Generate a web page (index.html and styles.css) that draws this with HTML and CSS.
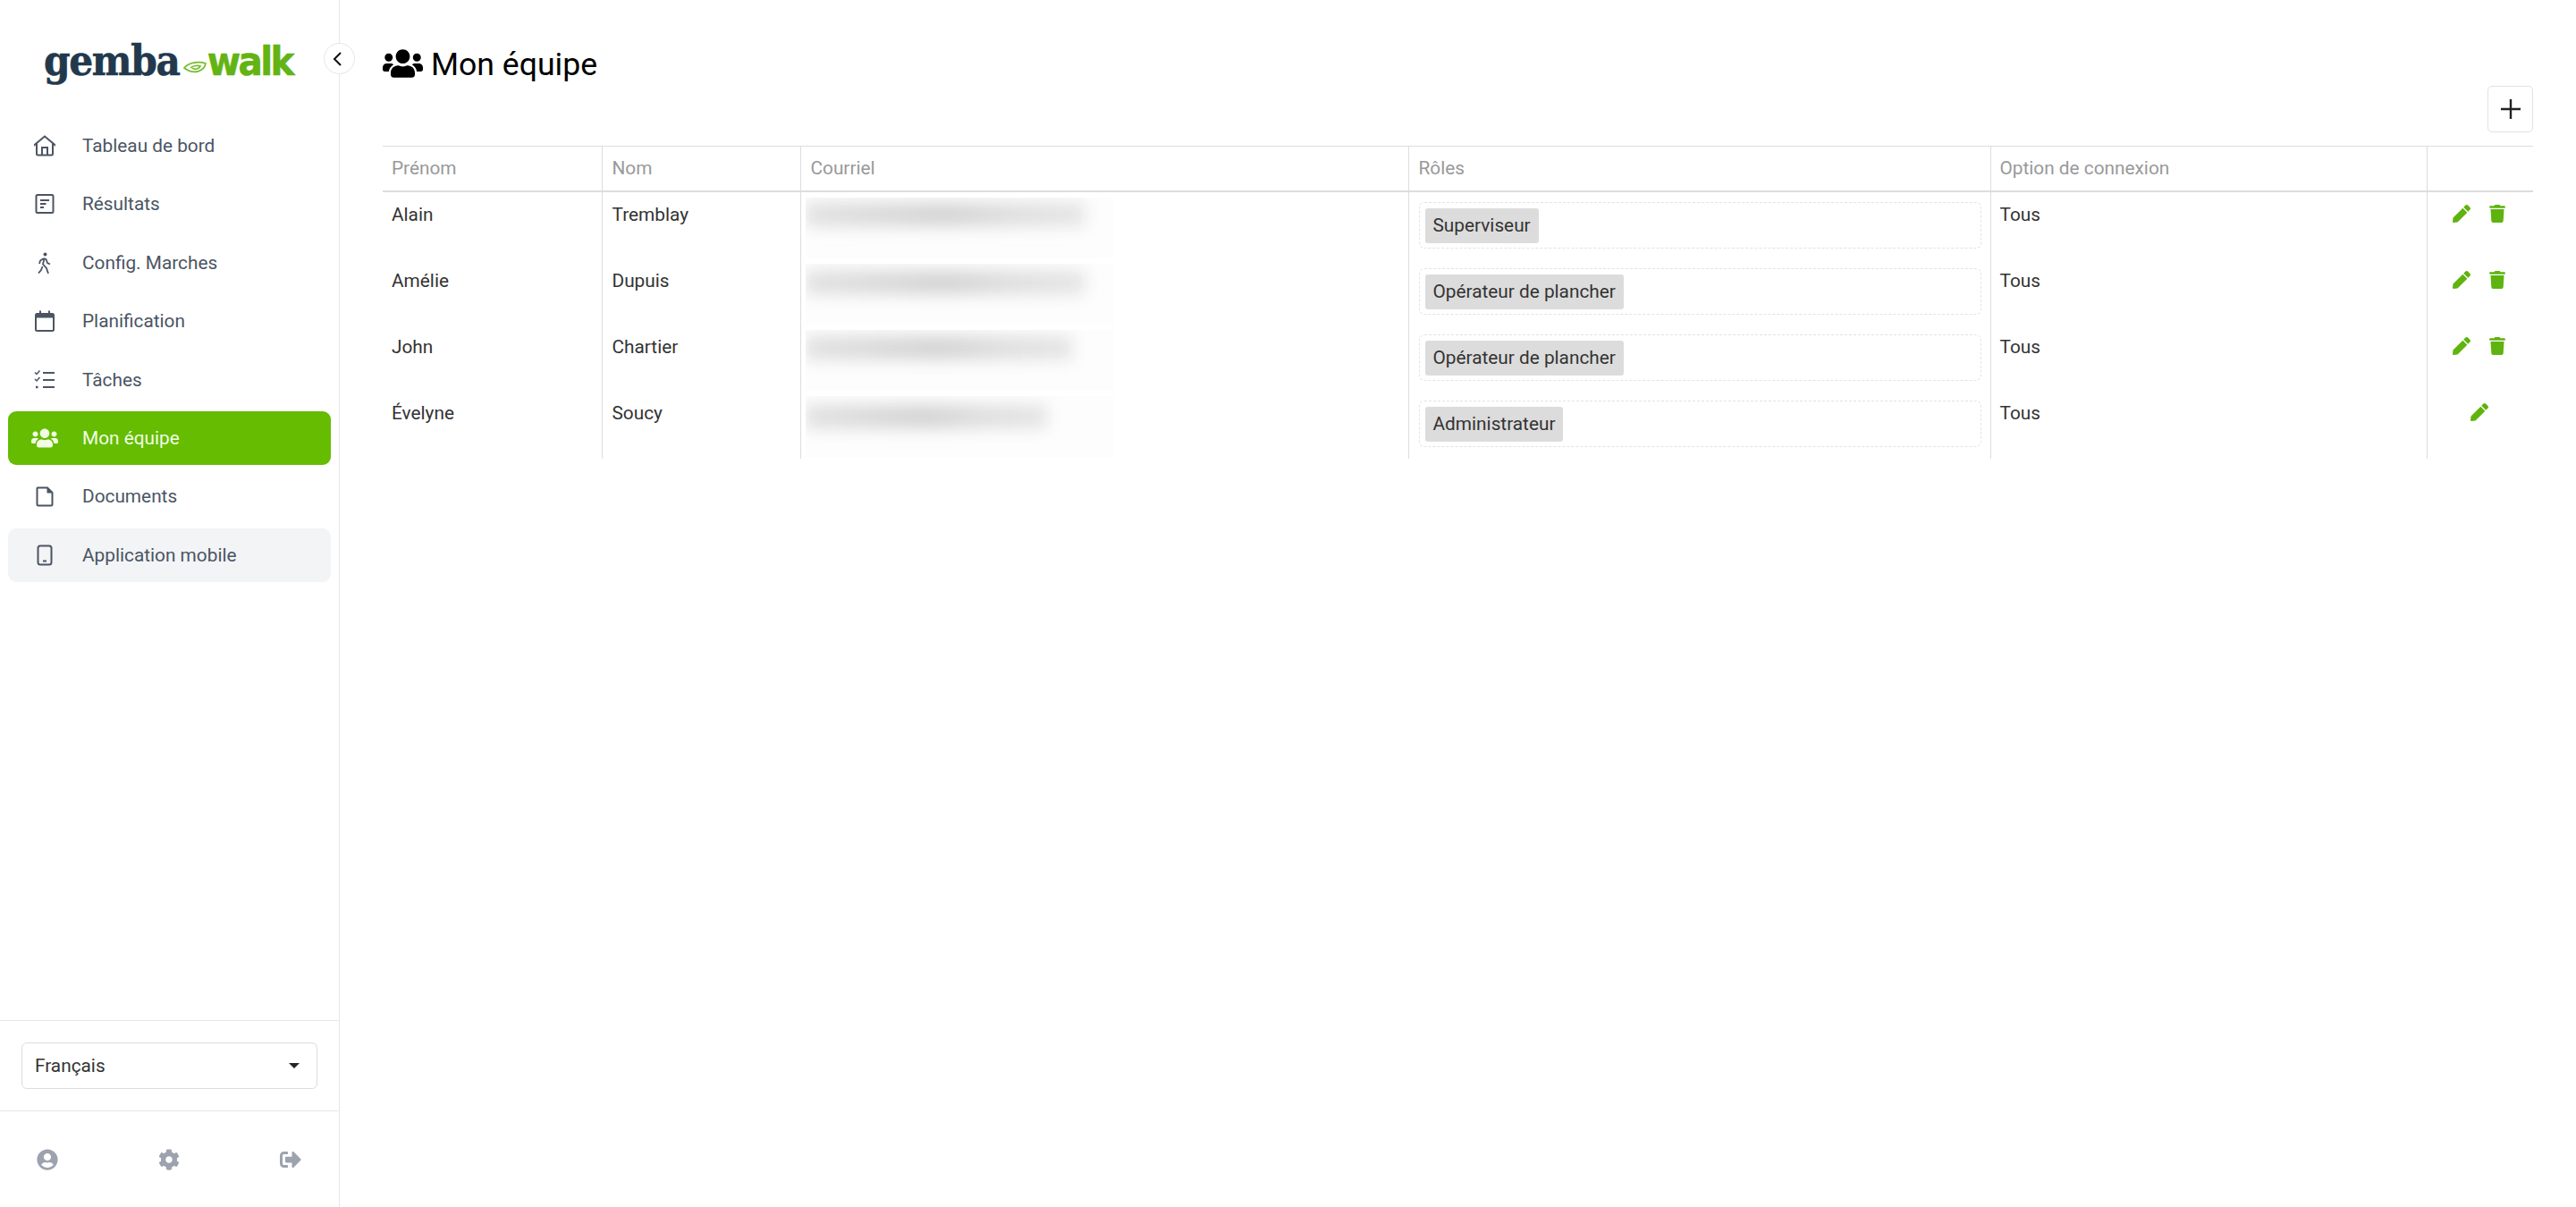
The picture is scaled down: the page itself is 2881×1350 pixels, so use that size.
FILE: index.html
```html
<!DOCTYPE html>
<html lang="fr">
<head>
  <meta charset="UTF-8" />
  <title>Mon équipe</title>
  <link rel="stylesheet" href="styles.css">
</head>
<body>
  <svg class="defs" aria-hidden="true">
    <symbol id="users" viewBox="0 0 640 512"><path d="M96 224c35.3 0 64-28.7 64-64s-28.7-64-64-64-64 28.7-64 64 28.7 64 64 64zm448 0c35.3 0 64-28.7 64-64s-28.7-64-64-64-64 28.7-64 64 28.7 64 64 64zm32 32h-64c-17.6 0-33.5 7.1-45.1 18.6 40.3 22.1 68.9 62 75.1 109.4h66c17.7 0 32-14.3 32-32v-32c0-35.3-28.7-64-64-64zm-256 0c61.9 0 112-50.1 112-112S381.9 32 320 32 208 82.1 208 144s50.1 112 112 112zm76.8 32h-8.3c-20.8 10-43.9 16-68.5 16s-47.6-6-68.5-16h-8.3C179.6 288 128 339.6 128 403.2V432c0 26.5 21.5 48 48 48h288c26.5 0 48-21.5 48-48v-28.8c0-63.6-51.6-115.2-115.2-115.2zm-223.7-13.4C161.5 263.1 145.6 256 128 256H64c-35.3 0-64 28.7-64 64v32c0 17.7 14.3 32 32 32h65.9c6.3-47.4 34.9-87.3 75.2-109.4z"/></symbol>
    <symbol id="pen" viewBox="0 0 512 512"><path d="M290.74 93.24l128.02 128.02-277.99 277.99-114.14 12.6C11.35 513.54-1.56 500.62.14 485.34l12.7-114.22 277.9-277.88zm207.2-19.06l-60.11-60.11c-18.75-18.75-49.16-18.75-67.91 0l-56.55 56.55 128.02 128.02 56.55-56.55c18.75-18.76 18.75-49.16 0-67.91z"/></symbol>
    <symbol id="trash" viewBox="0 0 448 512"><path d="M432 32H312l-9.4-18.7A24 24 0 0 0 281.1 0H166.8a23.72 23.72 0 0 0-21.4 13.3L136 32H16A16 16 0 0 0 0 48v32a16 16 0 0 0 16 16h416a16 16 0 0 0 16-16V48a16 16 0 0 0-16-16zM53.2 467a48 48 0 0 0 47.9 45h245.8a48 48 0 0 0 47.9-45L416 128H32z"/></symbol>
  </svg>

  <div class="layout">
    <!-- menu de gauche -->
    <aside class="sidebar">
      <button class="collapse-btn" aria-label="Réduire">
        <svg viewBox="0 0 12 18" width="12" height="18"><path d="M10 2 3 9l7 7" fill="none" stroke="#111" stroke-width="2"/></svg>
      </button>

      <div class="logo">
        <span class="logo-gemba">gemba</span>
        <svg class="logo-leaf" viewBox="0 0 26 16">
          <path d="M1 8C6 2 17 0 25 3 23 12 12 16 1 8Z M8 8c3-3 9-3 11-2-2 4-7 4-9 2" fill="none" stroke="#74bd2c" stroke-width="1.700"/>
        </svg>
        <span class="logo-walk">walk</span>
      </div>

      <nav class="nav">
        <a class="nav-item" href="#">
          <svg class="nav-icon" viewBox="0 0 24 24" fill="none" stroke="currentColor" stroke-width="2"><path d="M-.5 12 12 1.5 24.500 12M3 9.500V21a1.500 1.500 0 0 0 1.500 1.500h15A1.500 1.500 0 0 0 21 21V9.500M9 22.500V14h6v8.500"/></svg>
          Tableau de bord
        </a>
        <a class="nav-item" href="#">
          <svg class="nav-icon" viewBox="0 0 24 24" fill="none" stroke="currentColor" stroke-width="2"><rect x="2.500" y="2" width="19" height="20" rx="1.500"/><path d="M7 8h10M7 12h6.500M7 16h4"/></svg>
          Résultats
        </a>
        <a class="nav-item" href="#">
          <svg class="nav-icon" viewBox="0 0 24 24" fill="none" stroke="currentColor" stroke-width="2"><circle cx="12.500" cy="2.500" r="2" fill="currentColor" stroke="none"/><path d="M11 7 7 9.500 6 13M11 7l2.500 1 1.500 4 3 1.500M11.500 7.500l-1.500 6 4 4.500 2 6M9.500 16l-1.500 4-3 3.500" stroke-width="1.800"/></svg>
          Config. Marches
        </a>
        <a class="nav-item" href="#">
          <svg class="nav-icon" viewBox="0 0 24 24" fill="none" stroke="currentColor" stroke-width="2"><rect x="2" y="4" width="20" height="19" rx="1.500"/><path d="M2 6.500h20" stroke-width="4"/><path d="M7 .5v4M17 .5v4"/></svg>
          Planification
        </a>
        <a class="nav-item" href="#">
          <svg class="nav-icon" viewBox="0 0 24 24" fill="none" stroke="currentColor" stroke-width="2"><path d="M10 4h13M10 12h13M10 20h13"/><path d="M1 3.500 3 5.500 6.500 1.500M1 11 3 13 6.500 9" stroke-width="1.500"/><path d="M2 20h2.500" stroke-width="2.500"/></svg>
          Tâches
        </a>
        <a class="nav-item active" href="#">
          <svg class="nav-icon nav-icon-users" fill="currentColor"><use href="#users"/></svg>
          Mon équipe
        </a>
        <a class="nav-item" href="#">
          <svg class="nav-icon" viewBox="0 0 24 24" fill="none" stroke="currentColor" stroke-width="2"><path d="M4 2.500h11l5.500 5.500v13a1.500 1.500 0 0 1-1.500 1.500H5A1.500 1.500 0 0 1 3.500 21V3A.5.5 0 0 1 4 2.500Z"/><path d="M14.500 2.500 20.500 8.500H14.500Z" fill="currentColor" stroke="none"/></svg>
          Documents
        </a>
        <a class="nav-item hover" href="#">
          <svg class="nav-icon" viewBox="0 0 24 24" fill="none" stroke="currentColor" stroke-width="2"><rect x="4.500" y="1.500" width="15" height="21" rx="2.500"/><path d="M10 18.500h4"/></svg>
          Application mobile
        </a>
      </nav>

      <div class="lang-block">
        <div class="lang-select">
          <span>Français</span>
          <span class="caret"></span>
        </div>
      </div>

      <div class="foot-icons">
        <svg viewBox="0 0 496 512"><path d="M248 8C111 8 0 119 0 256s111 248 248 248 248-111 248-248S385 8 248 8zm0 96c48.6 0 88 39.4 88 88s-39.4 88-88 88-88-39.4-88-88 39.4-88 88-88zm0 344c-58.7 0-111.3-26.6-146.5-68.2 18.8-35.4 55.6-59.8 98.5-59.8 2.4 0 4.8.4 7.1 1.1 13 4.2 26.6 6.9 40.9 6.9 14.3 0 28-2.7 40.9-6.9 2.3-.7 4.700-1.100 7.100-1.100 42.900 0 79.700 24.400 98.500 59.800C359.300 421.400 306.700 448 248 448z"/></svg>
        <svg viewBox="0 0 512 512"><path d="M487.4 315.7l-42.6-24.6c4.3-23.2 4.3-47 0-70.2l42.6-24.6c4.9-2.8 7.1-8.6 5.5-14-11.1-35.6-30-67.8-54.7-94.6-3.8-4.1-10-5.1-14.8-2.3L380.8 110c-17.9-15.4-38.5-27.3-60.8-35.1V25.800c0-5.600-3.900-10.500-9.400-11.700-36.700-8.200-74.300-7.800-109.200 0-5.500 1.200-9.400 6.100-9.400 11.700V75c-22.200 7.900-42.800 19.800-60.800 35.100L88.700 85.500c-4.900-2.800-11-1.900-14.800 2.300-24.700 26.700-43.600 58.900-54.700 94.600-1.700 5.400.6 11.200 5.500 14L67.300 221c-4.300 23.200-4.300 47 0 70.200l-42.600 24.600c-4.900 2.800-7.100 8.600-5.500 14 11.100 35.600 30 67.800 54.700 94.600 3.800 4.100 10 5.100 14.800 2.300l42.600-24.600c17.900 15.400 38.500 27.300 60.800 35.100v49.200c0 5.600 3.900 10.500 9.400 11.700 36.700 8.200 74.300 7.800 109.200 0 5.500-1.200 9.400-6.100 9.400-11.700v-49.200c22.200-7.900 42.800-19.800 60.800-35.100l42.600 24.600c4.900 2.800 11 1.900 14.800-2.300 24.700-26.700 43.600-58.900 54.700-94.600 1.500-5.500-.7-11.300-5.600-14.100zM256 336c-44.100 0-80-35.900-80-80s35.900-80 80-80 80 35.900 80 80-35.900 80-80 80z"/></svg>
        <svg viewBox="0 0 512 512"><path d="M497 273L329 441c-15 15-41 4.500-41-17v-96H152c-13.300 0-24-10.700-24-24v-96c0-13.300 10.700-24 24-24h136V88c0-21.400 25.900-32 41-17l168 168c9.300 9.400 9.300 24.600 0 34zM192 436v-40c0-6.600-5.400-12-12-12H96c-17.700 0-32-14.300-32-32V160c0-17.700 14.300-32 32-32h84c6.600 0 12-5.400 12-12V76c0-6.600-5.400-12-12-12H96c-53 0-96 43-96 96v192c0 53 43 96 96 96h84c6.600 0 12-5.400 12-12z"/></svg>
      </div>
    </aside>

    <!-- contenu -->
    <main class="content">
      <h1 class="page-title">
        <svg class="title-icon"><use href="#users"/></svg>
        Mon équipe
      </h1>

      <div class="toolbar">
        <button class="add-btn" aria-label="Ajouter">
          <svg viewBox="0 0 24 24" width="24" height="24"><path d="M12 1v22M1 12h22" stroke="#222" stroke-width="2.400" fill="none"/></svg>
        </button>
      </div>

      <table class="team-table">
        <thead>
          <tr>
            <th class="col-first">Prénom</th>
            <th class="col-last">Nom</th>
            <th class="col-mail">Courriel</th>
            <th class="col-roles">Rôles</th>
            <th class="col-login">Option de connexion</th>
            <th class="col-actions"></th>
          </tr>
        </thead>
        <tbody>
          <tr>
            <td>Alain</td>
            <td>Tremblay</td>
            <td class="mail-cell"><div class="mail-mask"><div class="mail-blur mail-a"></div></div></td>
            <td class="roles-cell"><div class="roles-box"><span class="chip">Superviseur</span></div></td>
            <td class="login-cell">Tous</td>
            <td class="actions-cell">
              <div class="actions">
                <svg class="act-icon"><use href="#pen"/></svg>
                <svg class="act-icon"><use href="#trash"/></svg>
              </div>
            </td>
          </tr>
          <tr>
            <td>Amélie</td>
            <td>Dupuis</td>
            <td class="mail-cell"><div class="mail-mask"><div class="mail-blur mail-b"></div></div></td>
            <td class="roles-cell"><div class="roles-box"><span class="chip">Opérateur de plancher</span></div></td>
            <td class="login-cell">Tous</td>
            <td class="actions-cell">
              <div class="actions">
                <svg class="act-icon"><use href="#pen"/></svg>
                <svg class="act-icon"><use href="#trash"/></svg>
              </div>
            </td>
          </tr>
          <tr>
            <td>John</td>
            <td>Chartier</td>
            <td class="mail-cell"><div class="mail-mask"><div class="mail-blur mail-c"></div></div></td>
            <td class="roles-cell"><div class="roles-box"><span class="chip">Opérateur de plancher</span></div></td>
            <td class="login-cell">Tous</td>
            <td class="actions-cell">
              <div class="actions">
                <svg class="act-icon"><use href="#pen"/></svg>
                <svg class="act-icon"><use href="#trash"/></svg>
              </div>
            </td>
          </tr>
          <tr>
            <td>Évelyne</td>
            <td>Soucy</td>
            <td class="mail-cell"><div class="mail-mask"><div class="mail-blur mail-d"></div></div></td>
            <td class="roles-cell"><div class="roles-box"><span class="chip">Administrateur</span></div></td>
            <td class="login-cell">Tous</td>
            <td class="actions-cell">
              <div class="actions">
                <svg class="act-icon"><use href="#pen"/></svg>
              </div>
            </td>
          </tr>
        </tbody>
      </table>
    </main>
  </div>
</body>
</html>
```

FILE: styles.css
```css
body, html {
  height: 100%;
  margin: 0;
  font-family: Roboto, "Liberation Sans", sans-serif;
  font-size: 20.8px;
  color: #333;
  background: #fff;
  overflow: hidden;
}

.defs {
  display: none;
}

.layout {
  display: flex;
  height: 100%;
}

/* sidebar */
.sidebar {
  position: relative;
  width: 379px;
  flex-shrink: 0;
  display: flex;
  flex-direction: column;
  border-right: 1px solid #e5e7eb;
}

.collapse-btn {
  position: absolute;
  top: 48px;
  left: 362px;
  width: 35px;
  height: 35px;
  padding: 0 5px 0 0;
  border: 1px solid #e6e6e6;
  border-radius: 50%;
  background: #fff;
  display: flex;
  align-items: center;
  justify-content: center;
}

.logo {
  height: 133px;
  box-sizing: border-box;
  padding: 38px 0 0 49px;
  display: flex;
  align-items: baseline;
  line-height: 60px;
}

.logo-gemba {
  font-family: "DejaVu Serif Condensed", "DejaVu Serif", serif;
  font-weight: 700;
  font-size: 47px;
  letter-spacing: -1.3px;
  color: #22384c;
  -webkit-text-stroke: 0.6px #22384c;
}

.logo-walk {
  font-family: "DejaVu Sans Condensed", "DejaVu Sans", sans-serif;
  font-weight: 700;
  font-size: 45px;
  letter-spacing: -2.6px;
  color: #63b312;
  -webkit-text-stroke: 0.6px #63b312;
}

.logo-leaf {
  width: 26px;
  height: 16px;
  margin: 0 1px 0 4px;
}

.nav {
  flex: 1;
  display: flex;
  flex-direction: column;
  gap: 5.4px;
  padding: 0 9px;
}

.nav-item {
  height: 60px;
  display: flex;
  align-items: center;
  gap: 30px;
  padding-left: 29px;
  border-radius: 9px;
  color: #4b5563;
  text-decoration: none;
}

.nav-item.active {
  background-color: #65bc00;
  color: #f2fde6;
}

.nav-item.hover {
  background-color: #f3f4f6;
}

.nav-icon {
  width: 24px;
  height: 24px;
  flex-shrink: 0;
}

.nav-icon-users {
  width: 30px;
  margin: 0 -3px;
}

.lang-block {
  border-top: 1px solid #e5e7eb;
  border-bottom: 1px solid #e5e7eb;
  padding: 24px;
}

.lang-select {
  height: 52px;
  box-sizing: border-box;
  display: flex;
  align-items: center;
  justify-content: space-between;
  padding: 0 19px 0 14px;
  border: 1px solid #dcdcdc;
  border-radius: 6px;
}

.caret {
  width: 0;
  height: 0;
  border-left: 6px solid transparent;
  border-right: 6px solid transparent;
  border-top: 6px solid #212529;
}

.foot-icons {
  height: 107px;
  display: flex;
  align-items: center;
  justify-content: space-between;
  padding: 0 42px 0 41px;
}

.foot-icons svg {
  width: 24px;
  height: 24px;
  fill: #9ca3af;
}

/* contenu */
.content {
  flex: 1;
  padding: 50px 48px 0 48px;
  min-width: 0;
}

.page-title {
  height: 44px;
  margin: 0;
  display: flex;
  align-items: center;
  gap: 9px;
  font-size: 35.6px;
  font-weight: 400;
  color: #000;
}

.title-icon {
  width: 45px;
  height: 36px;
  margin-top: -2px;
}

.toolbar {
  display: flex;
  justify-content: flex-end;
  margin: 2px 0 15px;
}

.add-btn {
  width: 51px;
  height: 52px;
  padding: 0;
  border: 1px solid #dee2e6;
  border-radius: 5px;
  background: #fff;
  display: flex;
  align-items: center;
  justify-content: center;
}

.team-table {
  width: 2405px;
  table-layout: fixed;
  border-collapse: collapse;
}

.team-table th {
  box-sizing: border-box;
  height: 50px;
  padding: 0 10px;
  text-align: left;
  font-weight: 400;
  color: #999;
  border-top: 1px solid #ddd;
  border-bottom: 2px solid #ddd;
}

.team-table th + th,
.team-table td + td {
  border-left: 1px solid #ddd;
  padding-left: 11px;
}

.team-table th.col-login,
.team-table td.login-cell {
  padding-left: 10px;
}

.col-first { width: 245px; }
.col-last { width: 222px; }
.col-mail { width: 680px; }
.col-roles { width: 651px; }
.col-login { width: 488px; }
.col-actions { width: 119px; }

.team-table td {
  box-sizing: border-box;
  padding: 9px 10px 0;
  vertical-align: top;
  line-height: 32px;
  height: 74.33px;
}

.team-table tr:last-child td {
  height: 76px;
}

.team-table td.mail-cell {
  padding: 6px 0 0 5px;
}

.mail-mask {
  width: 345px;
  height: 68px;
  overflow: hidden;
  background: #fdfdfd;
}

.mail-blur {
  height: 26px;
  margin-top: 6px;
  filter: blur(9px);
  background: linear-gradient(90deg, #e0e0e0, #d6d6d6 35%, #d2d2d2 50%, #dedede 75%, #e4e4e4);
}

.mail-a { width: 312px; }
.mail-b { width: 312px; margin-top: 8px; }
.mail-c { width: 298px; margin-top: 7px; }
.mail-d { width: 270px; margin-top: 10px; }

.team-table td.roles-cell {
  padding: 11px 10px 0 11px;
}

.roles-box {
  height: 52px;
  box-sizing: border-box;
  padding: 6px;
  border: 1px dashed #e3e3e3;
  border-radius: 6px;
}

.chip {
  display: inline-block;
  height: 39px;
  line-height: 39px;
  padding: 0 9px;
  background: #dcdcdc;
  border-radius: 3px;
}

.team-table td.actions-cell {
  padding: 14px 2px 0 0;
}

.actions {
  display: flex;
  justify-content: center;
  gap: 20px;
}

.act-icon {
  width: 20px;
  height: 20px;
  fill: #5fb30f;
}
```
